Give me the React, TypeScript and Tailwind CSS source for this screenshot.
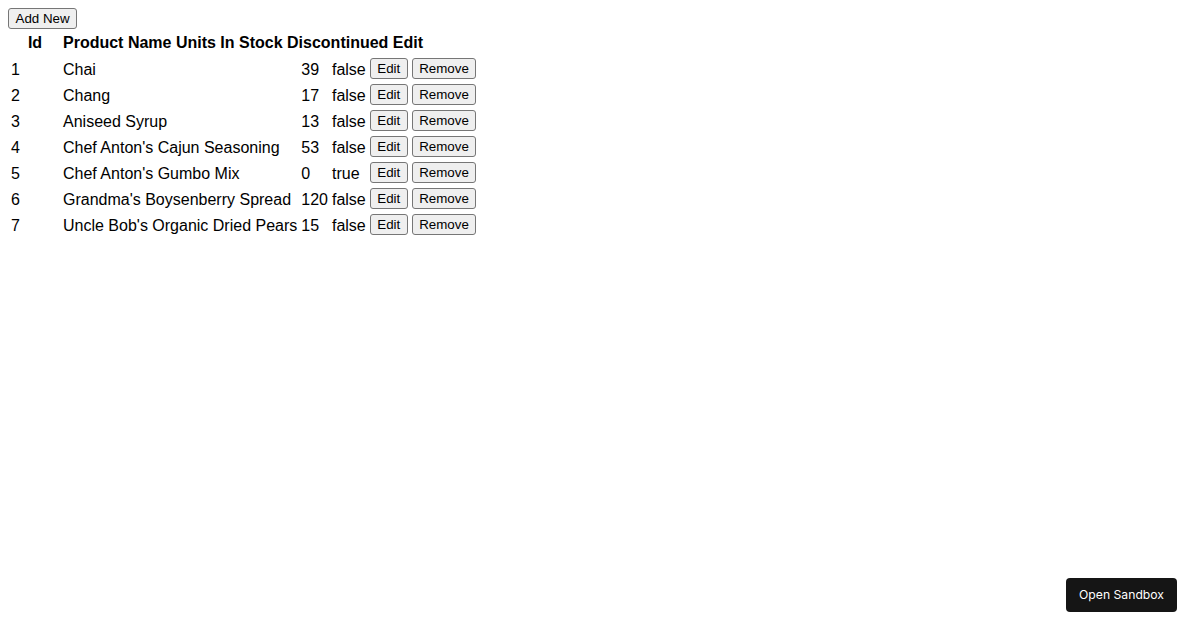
import React from "react";

const rows = [
  { id: 1, name: "Chai", units: 39, disc: false },
  { id: 2, name: "Chang", units: 17, disc: false },
  { id: 3, name: "Aniseed Syrup", units: 13, disc: false },
  { id: 4, name: "Chef Anton's Cajun Seasoning", units: 53, disc: false },
  { id: 5, name: "Chef Anton's Gumbo Mix", units: 0, disc: true },
  { id: 6, name: "Grandma's Boysenberry Spread", units: 120, disc: false },
  { id: 7, name: "Uncle Bob's Organic Dried Pears", units: 15, disc: false },
];

function Btn({ children }: { children: React.ReactNode }) {
  return (
    <button className="block h-[21px] px-[6.5px] border border-[#767676] rounded-[3px] bg-[#efefef] text-[13.333px] leading-[19px] text-black font-['Liberation_Sans',Arial,sans-serif]">
      {children}
    </button>
  );
}

export default function App() {
  return (
    <div className="min-h-screen bg-white p-2 text-black text-[16px] leading-[normal] font-['Liberation_Sans',Arial,sans-serif]">
      <Btn>Add New</Btn>
      <table className="border-separate border-spacing-[2px]">
        <thead>
          <tr>
            <th className="h-[24px] w-[50px] p-[1px] text-center align-middle font-bold">Id</th>
            <th colSpan={5} className="h-[24px] p-[1px] text-left align-middle font-bold whitespace-nowrap">
              Product Name Units In Stock Discontinued Edit
            </th>
          </tr>
        </thead>
        <tbody>
          {rows.map((r) => (
            <tr key={r.id}>
              <td className="h-[24px] w-[50px] px-[1px] pt-[2px] pb-0 align-middle">{r.id}</td>
              <td className="h-[24px] px-[1px] pt-[2px] pb-0 align-middle whitespace-nowrap">{r.name}</td>
              <td className="h-[24px] px-[1px] pt-[2px] pb-0 align-middle">{r.units}</td>
              <td className="h-[24px] px-[1px] pt-[2px] pb-0 align-middle">{r.disc ? "true" : "false"}</td>
              <td className="h-[24px] px-[1px] pt-0 pb-[1px] align-middle">
                <Btn>Edit</Btn>
              </td>
              <td className="h-[24px] px-[1px] pt-0 pb-[1px] align-middle">
                <Btn>Remove</Btn>
              </td>
            </tr>
          ))}
        </tbody>
      </table>
      <button className="fixed bottom-[18px] right-[23px] h-[34px] px-[13px] pb-[2px] rounded-[4px] bg-[#151515] text-white text-[12.2px] font-['Inter',sans-serif] flex items-center">
        Open Sandbox
      </button>
    </div>
  );
}
